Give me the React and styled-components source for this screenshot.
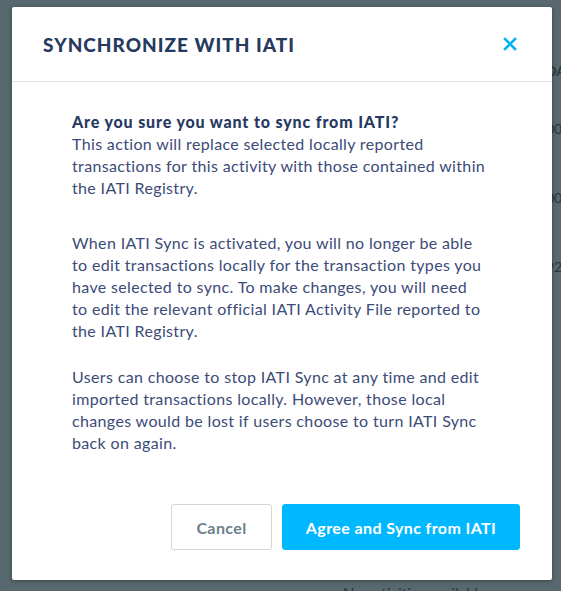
import React from 'react';
import styled, { createGlobalStyle } from 'styled-components';

const GlobalStyle = createGlobalStyle`
  * {
    box-sizing: border-box;
  }
  html,
  body {
    margin: 0;
    padding: 0;
    background: #fff;
    font-family: Lato, 'Noto Sans', sans-serif;
  }
`;

const Page = styled.div`
  width: 561px;
  height: 591px;
  overflow: hidden;
  position: relative;
  background: #fbfcfc;
`;

const Table = styled.div`
  display: flex;
  flex-direction: column;
  padding: 54px 0 0 520px;
`;

const TableRow = styled.div`
  display: flex;
  align-items: center;
  height: ${({ head }) => (head ? '34px' : '69px')};
  border-bottom: 1px solid #f6f8f9;
  font-size: 14px;
  font-weight: ${({ head }) => (head ? 700 : 400)};
  color: #2a3540;
  padding-left: 26px;
  padding-top: ${({ head }) => (head ? '0' : '12px')};
  white-space: nowrap;
`;

const EmptyNote = styled.div`
  position: absolute;
  left: 343px;
  top: 584px;
  font-size: 15px;
  color: #2a3540;
`;

const Backdrop = styled.div`
  position: absolute;
  inset: 0;
  background: rgba(36, 56, 65, 0.76);
  padding: 7px 0 0 12px;
`;

const Modal = styled.div`
  width: 540px;
  background: #fff;
  border-radius: 2px;
  box-shadow: 0 1px 4px rgba(0, 0, 0, 0.35);
  display: flex;
  flex-direction: column;
`;

const Header = styled.div`
  height: 75px;
  display: flex;
  align-items: center;
  justify-content: space-between;
  padding: 0 33px 0 31px;
  border-bottom: 1px solid #e3e5e6;
`;

const Title = styled.h2`
  margin: 0;
  font-size: 19px;
  font-weight: 900;
  letter-spacing: 1px;
  text-transform: uppercase;
  color: #26395f;
`;

const CloseButton = styled.button`
  border: none;
  background: none;
  padding: 0;
  width: 18px;
  height: 18px;
  display: flex;
  align-items: center;
  justify-content: center;
  cursor: pointer;
`;

const Body = styled.div`
  padding: 29px 40px 0 60px;
  font-size: 16px;
  letter-spacing: 0.35px;
  line-height: 22px;
  color: #3c4b78;
  white-space: nowrap;
`;

const Paragraph = styled.p`
  margin: 0 0 ${({ gap }) => gap}px;
`;

const Question = styled.strong`
  display: block;
  font-weight: 900;
  letter-spacing: 0.85px;
  color: #26395f;
`;

const Footer = styled.div`
  display: flex;
  justify-content: flex-end;
  gap: 10px;
  padding: 50px 32px 30px;
`;

const Button = styled.button`
  height: 46px;
  padding: 0;
  border-radius: 3px;
  font-family: Lato, 'Noto Sans', sans-serif;
  font-size: 16px;
  font-weight: 700;
  letter-spacing: 0.4px;
  cursor: pointer;
  border: 1px solid ${({ primary }) => (primary ? '#00b8ff' : '#d2d6d8')};
  background: ${({ primary }) => (primary ? '#00b8ff' : '#fff')};
  color: ${({ primary }) => (primary ? '#fff' : '#6d7f8a')};
  width: ${({ primary }) => (primary ? '238px' : '101px')};
`;

const CloseIcon = () => (
  <svg width="14" height="14" viewBox="0 0 14 14">
    <path
      d="M2 2 L12 12 M12 2 L2 12"
      stroke="#00b4f0"
      strokeWidth="2.6"
      strokeLinecap="square"
    />
  </svg>
);

const App = () => (
  <>
    <GlobalStyle />
    <Page>
      <Table>
        <TableRow head>DATE</TableRow>
        <TableRow>00</TableRow>
        <TableRow>00</TableRow>
        <TableRow>92</TableRow>
      </Table>
      <EmptyNote>No activities available</EmptyNote>
      <Backdrop>
        <Modal>
          <Header>
            <Title>Synchronize with IATI</Title>
            <CloseButton aria-label="Close">
              <CloseIcon />
            </CloseButton>
          </Header>
          <Body>
            <Paragraph gap={33}>
              <Question>Are you sure you want to sync from IATI?</Question>
              This action will replace selected locally reported
              <br />
              transactions for this activity with those contained within
              <br />
              the IATI Registry.
            </Paragraph>
            <Paragraph gap={24}>
              When IATI Sync is activated, you will no longer be able
              <br />
              to edit transactions locally for the transaction types you
              <br />
              have selected to sync. To make changes, you will need
              <br />
              to edit the relevant official IATI Activity File reported to
              <br />
              the IATI Registry.
            </Paragraph>
            <Paragraph gap={0}>
              Users can choose to stop IATI Sync at any time and edit
              <br />
              imported transactions locally. However, those local
              <br />
              changes would be lost if users choose to turn IATI Sync
              <br />
              back on again.
            </Paragraph>
          </Body>
          <Footer>
            <Button>Cancel</Button>
            <Button primary>Agree and Sync from IATI</Button>
          </Footer>
        </Modal>
      </Backdrop>
    </Page>
  </>
);

export default App;
